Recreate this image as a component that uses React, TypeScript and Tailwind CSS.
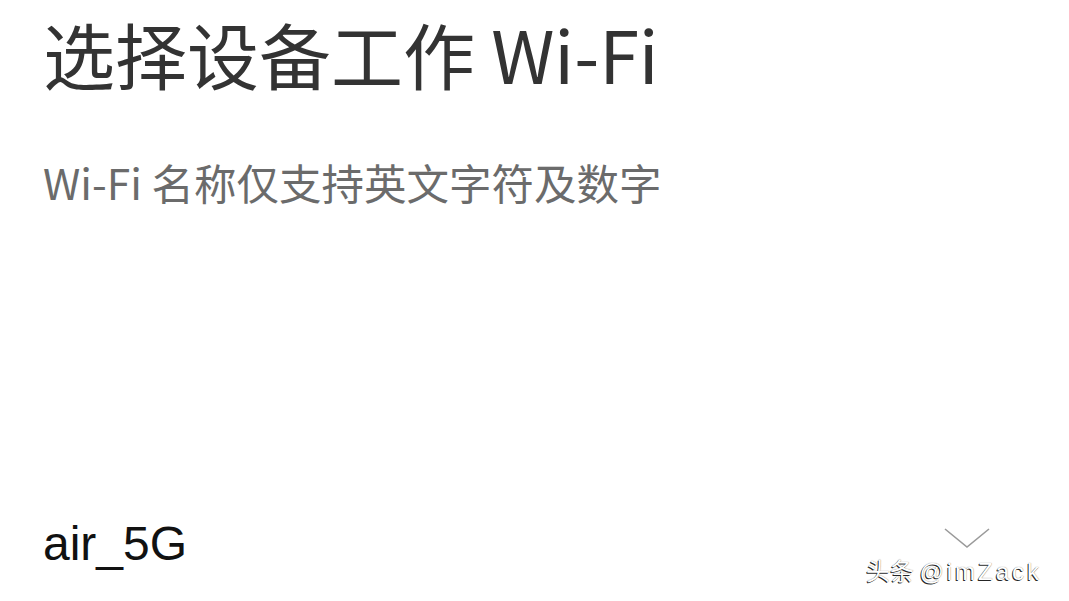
import React from 'react'

function Chevron() {
  return (
    <svg width="48" height="22" viewBox="0 0 48 22" fill="none" className="mt-[7px] mr-[78px]">
      <polyline points="2,2 24,20 46,2" stroke="#9a9a9a" strokeWidth="1.6" />
    </svg>
  )
}

export default function App() {
  return (
    <div className="relative w-[1069px] h-[601px] bg-white overflow-hidden flex flex-col pl-[43px] font-['Noto_Sans_CJK_SC',sans-serif]">
      {/* Header */}
      <h1 className="mt-[17px] text-[72px] leading-none text-[#333333] font-normal whitespace-nowrap">
        选择设备工作 Wi-Fi
      </h1>
      <p className="mt-[72px] text-[42.5px] leading-none text-[#6b6b6b] whitespace-nowrap">
        Wi-Fi 名称仅支持英文字符及数字
      </p>

      <div className="flex-1" />

      {/* Selected network */}
      <div className="flex items-start justify-between mb-[33px]">
        <span className="text-[48px] leading-none text-[#111111] font-['Liberation_Sans',sans-serif]">air_5G</span>
        <Chevron />
      </div>

      {/* Watermark */}
      <div className="absolute left-[866px] top-[553px] text-[24px] leading-[34px] text-white whitespace-nowrap [text-shadow:-1px_1px_0_rgba(0,0,0,0.85),0_0_1px_rgba(0,0,0,0.6)]">
        头条 <span className="tracking-[3px] font-['Liberation_Sans',sans-serif]">@imZack</span>
      </div>
    </div>
  )
}
